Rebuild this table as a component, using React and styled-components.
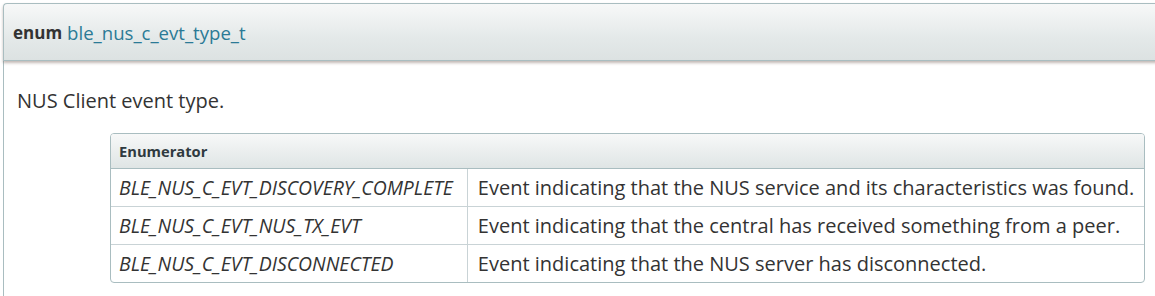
import styled, { createGlobalStyle } from "styled-components";

const GlobalStyle = createGlobalStyle`
  html, body {
    margin: 0;
    padding: 0;
    background: #ffffff;
  }
  body {
    font-family: "Open Sans", "Liberation Sans", sans-serif;
    color: #333333;
  }
`

const MemberBox = styled.div`
  padding: 3px 0 0 3px;
  width: 1160px;
  height: 293px;
  overflow: hidden;
`

const MemberTitle = styled.div`
  height: 56px;
  display: flex;
  align-items: center;
  padding-left: 9px;
  border: 1px solid #a9bdc0;
  border-right: none;
  border-top-left-radius: 4px;
  background: linear-gradient(to bottom, #f7f8f8 0%, #e4e9e9 60%, #dce2e2 100%);
  box-shadow: 0 2px 3px rgba(120, 100, 90, 0.45);
  font-size: 18.6px;
  position: relative;
  z-index: 1;
`

const Keyword = styled.span`
  font-size: 17px;
  font-weight: 700;
  color: #333333;
  margin-right: 5px;
`

const TypeName = styled.span`
  color: #2b7a96;
`

const MemberDoc = styled.div`
  border-left: 1px solid #a9bdc0;
  padding: 26px 0 0 13px;
  height: 240px;
`

const Brief = styled.p`
  margin: 0 0 19px 0;
  font-size: 20px;
  line-height: 27px;
  color: #333333;
`

const EnumTable = styled.table`
  margin-left: 93px;
  border-collapse: separate;
  border-spacing: 0;
  border: 1px solid #a9bdc0;
  border-radius: 4px;
  overflow: hidden;
`

const HeadCell = styled.th`
  text-align: left;
  height: 34px;
  padding: 0 8px;
  font-size: 14.7px;
  font-weight: 700;
  color: #2f3a40;
  background: linear-gradient(to bottom, #f7f8f8 0%, #dfe5e5 100%);
  border-bottom: 1px solid #a9bdc0;
`

const Cell = styled.td`
  height: 37px;
  padding: ${(p) => (p.$desc ? "0 10px 0 10px" : "0 14px 0 8px")};
  font-size: ${(p) => (p.$name ? "19.4px" : "20px")};
  font-style: ${(p) => (p.$name ? "italic" : "normal")};
  color: #333333;
  white-space: nowrap;
  border-top: ${(p) => (p.$first ? "none" : "1px solid #c9d3d6")};
  border-left: ${(p) => (p.$desc ? "1px solid #c9d3d6" : "none")};
`

const values = [
  ["BLE_NUS_C_EVT_DISCOVERY_COMPLETE", "Event indicating that the NUS service and its characteristics was found."],
  ["BLE_NUS_C_EVT_NUS_TX_EVT", "Event indicating that the central has received something from a peer."],
  ["BLE_NUS_C_EVT_DISCONNECTED", "Event indicating that the NUS server has disconnected."],
]

export default function App() {
  return (
    <>
      <GlobalStyle />
      <MemberBox>
        <MemberTitle>
          <Keyword>enum</Keyword>
          <TypeName>ble_nus_c_evt_type_t</TypeName>
        </MemberTitle>
        <MemberDoc>
          <Brief>NUS Client event type.</Brief>
          <EnumTable>
            <thead>
              <tr>
                <HeadCell colSpan={2}>Enumerator</HeadCell>
              </tr>
            </thead>
            <tbody>
              {values.map(([name, desc], i) => (
                <tr key={name}>
                  <Cell $name $first={i === 0}>{name}</Cell>
                  <Cell $desc $first={i === 0}>{desc}</Cell>
                </tr>
              ))}
            </tbody>
          </EnumTable>
        </MemberDoc>
      </MemberBox>
    </>
  )
}
